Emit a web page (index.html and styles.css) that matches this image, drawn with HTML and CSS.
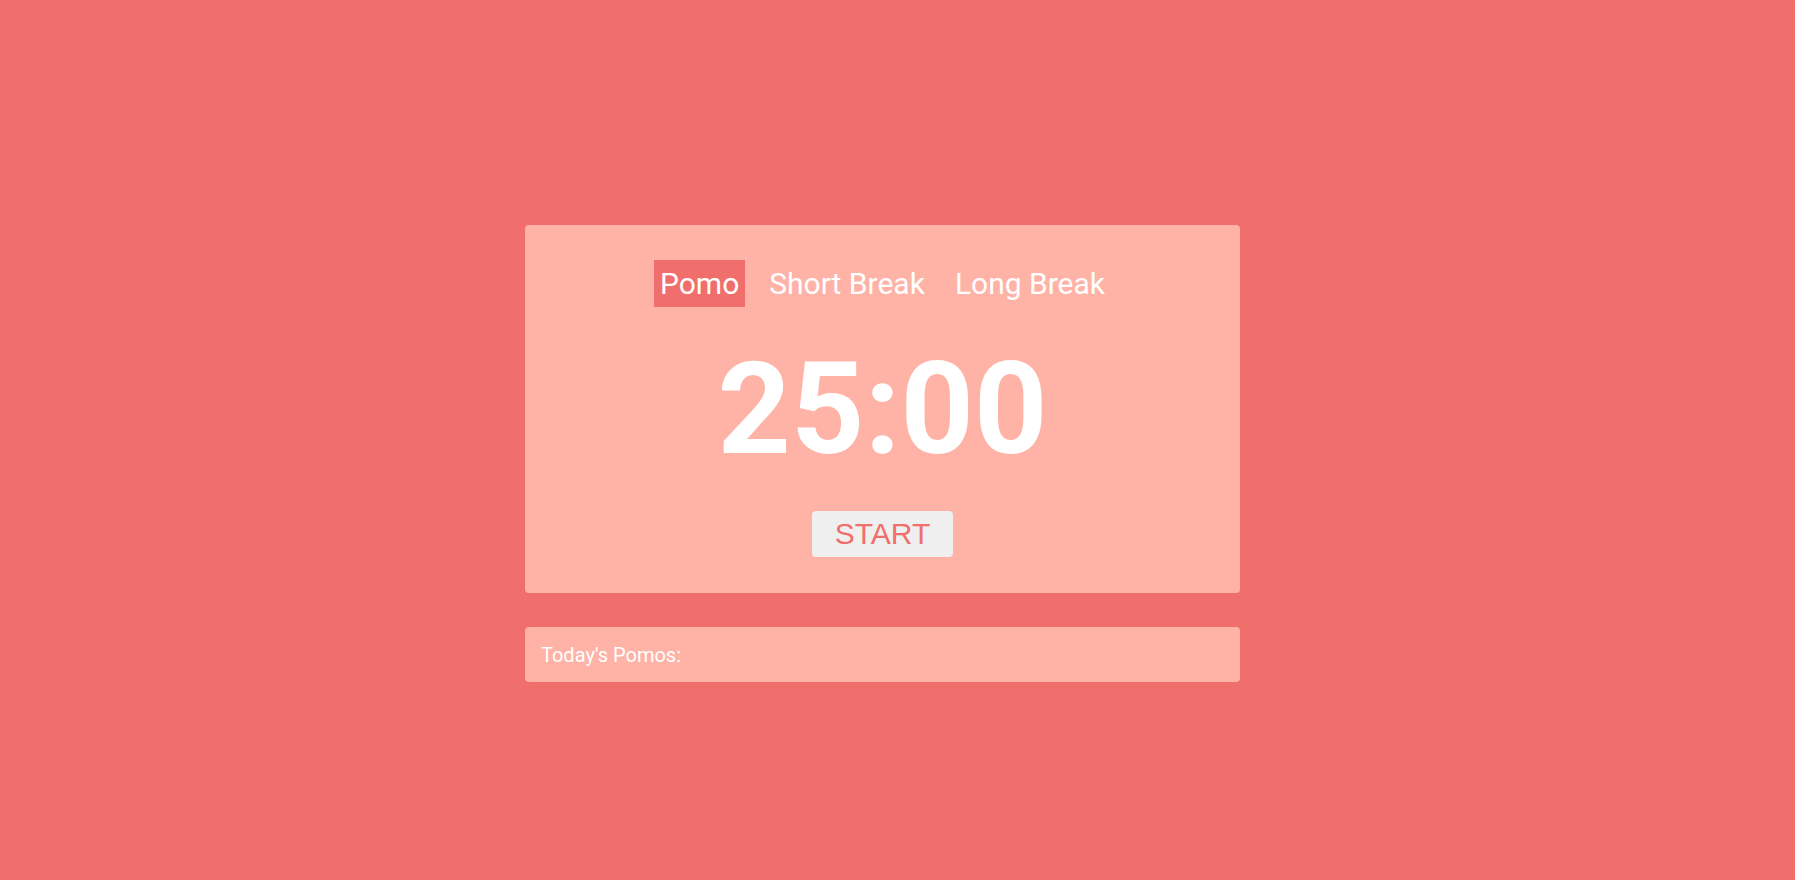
FILE: index.html
```html
<!DOCTYPE html>
<html lang="en">
<head>
<meta charset="utf-8">
<title>Pomodoro</title>
<link rel="stylesheet" href="styles.css">
</head>
<body>
<main class="page">
  <section class="timer-card">
    <nav class="tabs">
      <button class="tab tab-active">Pomo</button>
      <button class="tab">Short Break</button>
      <button class="tab">Long Break</button>
    </nav>
    <div class="clock">25:00</div>
    <button class="start">START</button>
  </section>
  <section class="log-card">Today's Pomos:</section>
</main>
</body>
</html>
```

FILE: styles.css
```css
html, body {
  margin: 0;
  padding: 0;
  background: #f06f6c;
  height: 100%;
}

.page {
  display: flex;
  flex-direction: column;
  align-items: center;
  padding: 225px 30px 0 0;
  gap: 34px;
  font-family: Roboto, "Liberation Sans", sans-serif;
  color: #ffffff;
}

.timer-card {
  box-sizing: border-box;
  width: 715px;
  height: 368px;
  background: #ffb2a6;
  border-radius: 4px;
  padding: 35px 0 36px;
  display: flex;
  flex-direction: column;
  align-items: center;
}

.tabs {
  display: flex;
  gap: 18px;
}

.tab {
  box-sizing: border-box;
  height: 47px;
  font-family: Roboto, "Liberation Sans", sans-serif;
  font-size: 30px;
  line-height: 35px;
  padding: 6px 6px;
  margin: 0;
  border: 0;
  border-radius: 0;
  background: transparent;
  color: #ffffff;
  cursor: pointer;
}

.tab-active {
  background: #f06f6c;
}

.clock {
  margin-top: 27px;
  font-family: Roboto, "Liberation Sans", sans-serif;
  font-weight: 700;
  font-size: 128px;
  line-height: 150px;
  color: #ffffff;
}

.start {
  margin-top: 27px;
  height: 46px;
  padding: 0 23px;
  border: 0;
  border-radius: 4px;
  background: #efefef;
  color: #f06f6c;
  font-family: "Liberation Sans", Arial, sans-serif;
  font-size: 30px;
  cursor: pointer;
}

.log-card {
  box-sizing: border-box;
  width: 715px;
  height: 55px;
  background: #ffb2a6;
  border-radius: 4px;
  padding: 0 16px;
  display: flex;
  align-items: center;
  font-size: 20px;
  color: #ffffff;
}
```
